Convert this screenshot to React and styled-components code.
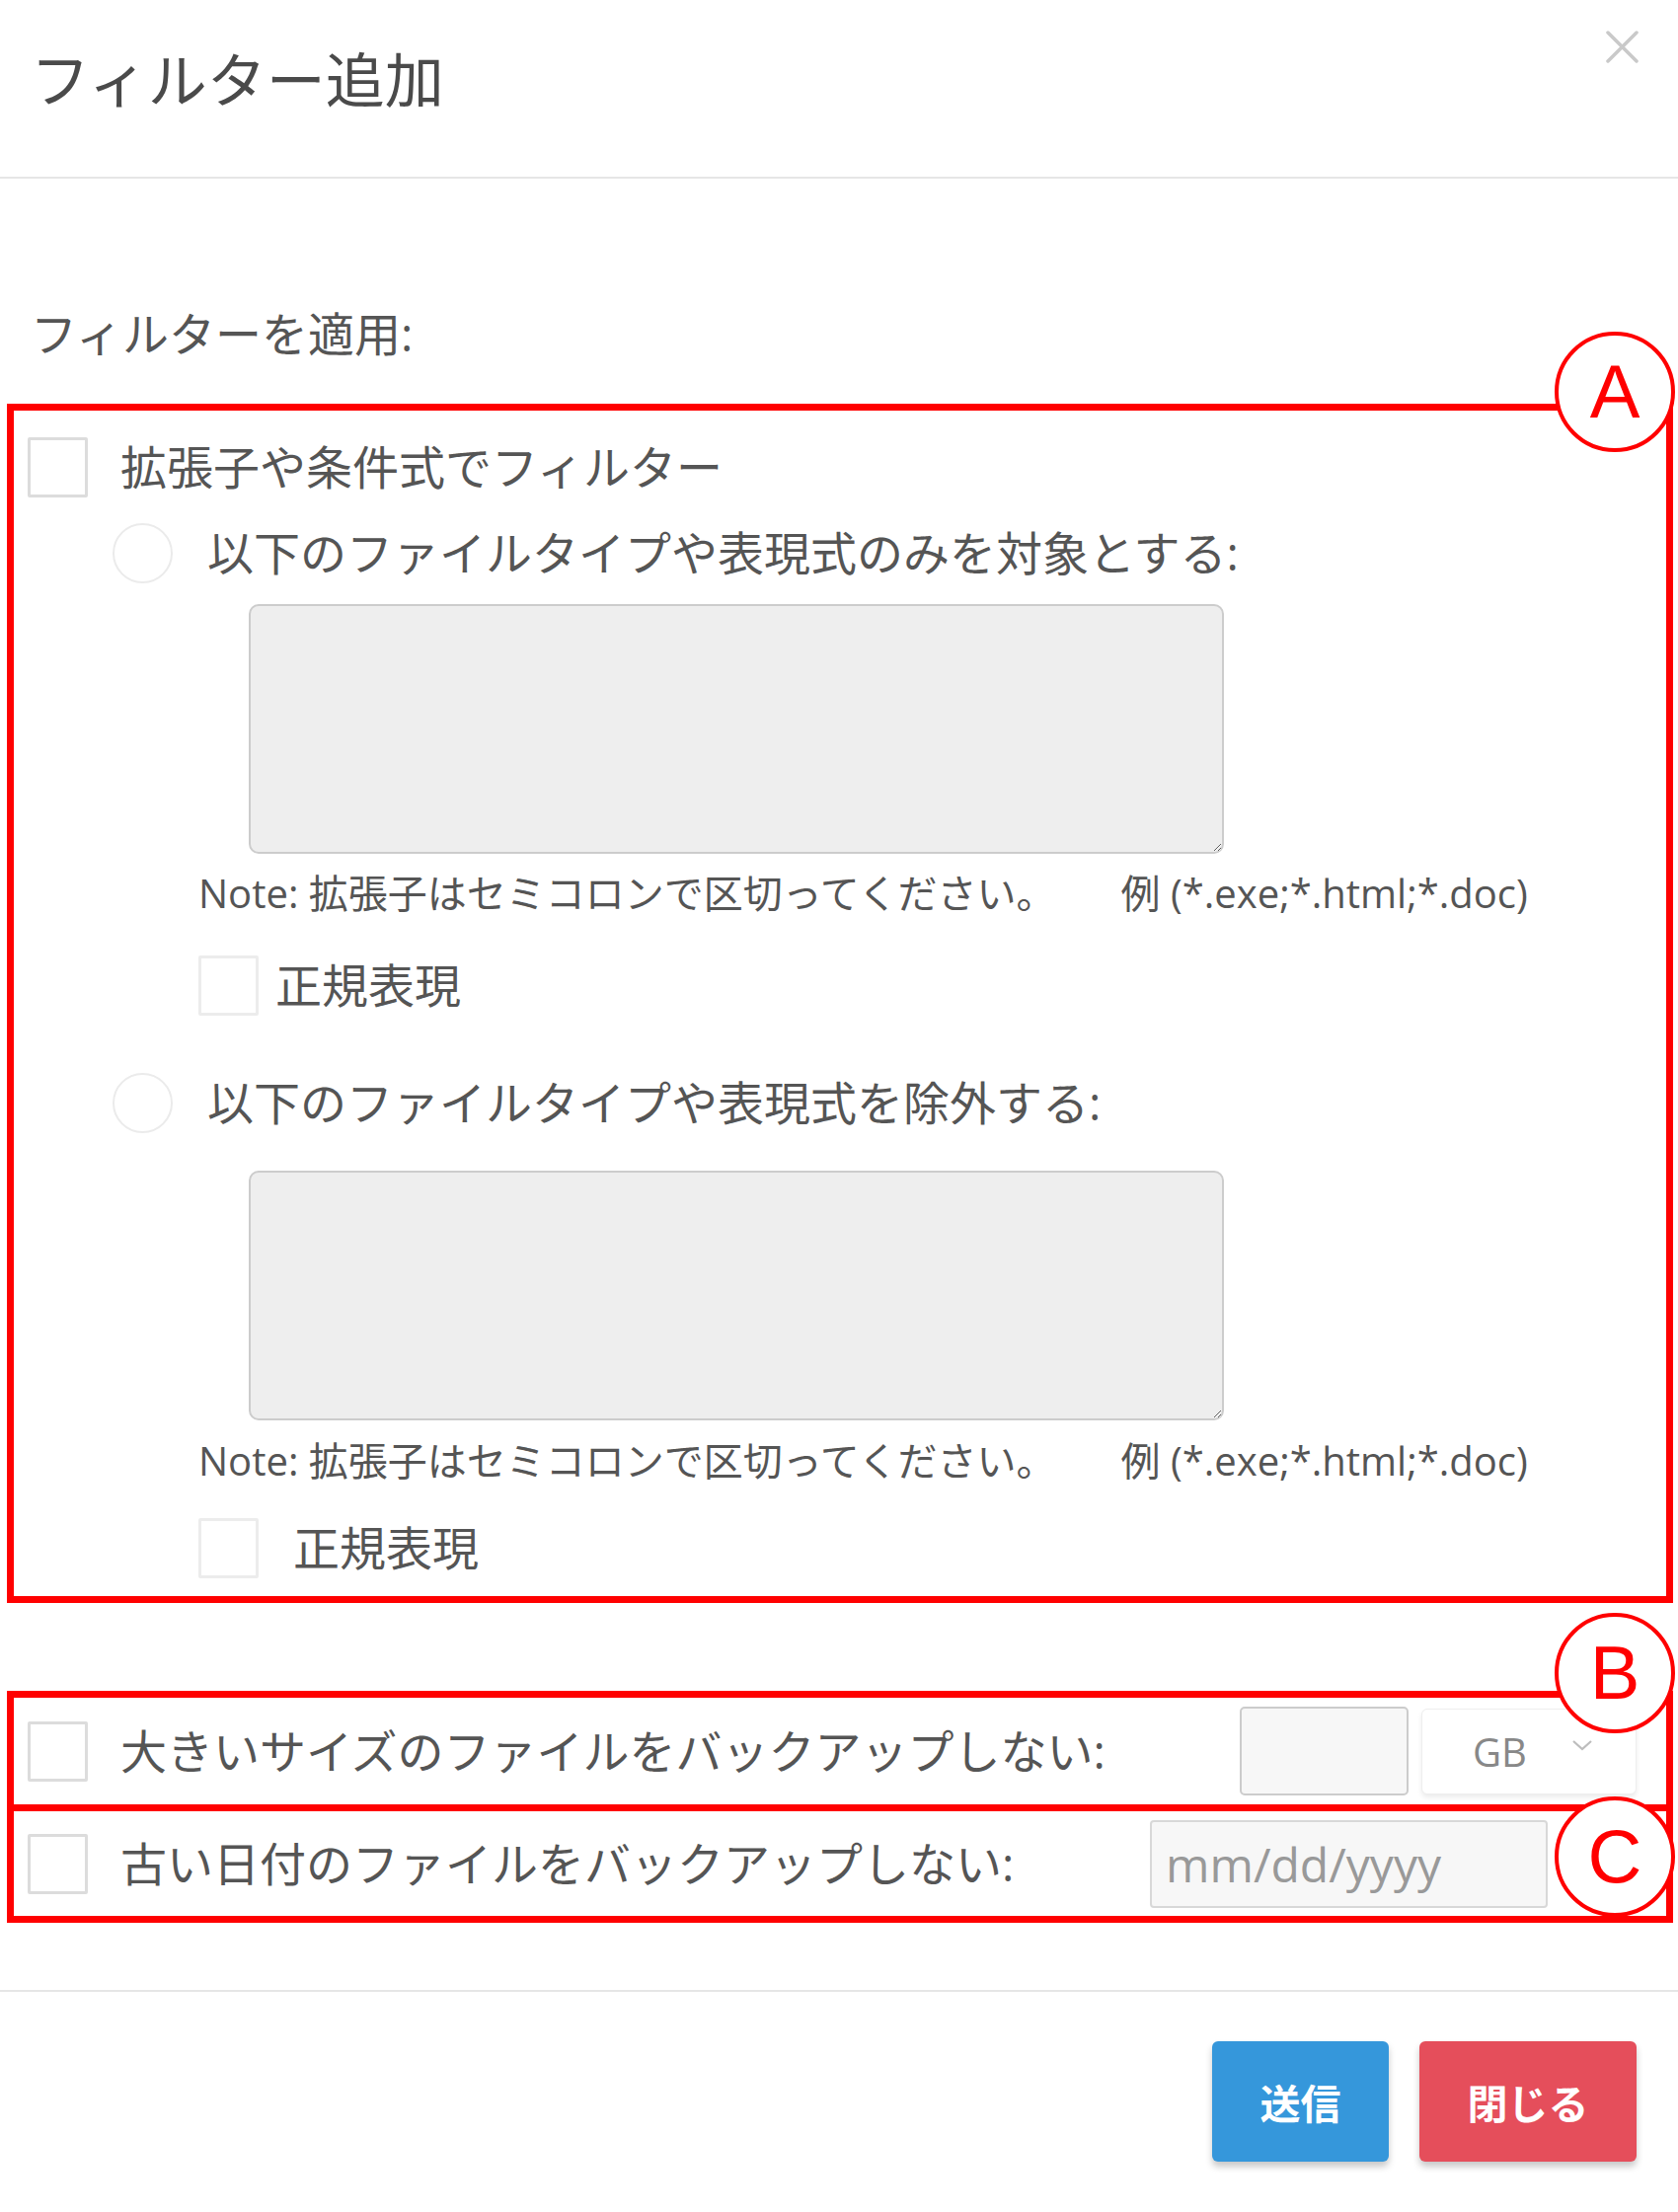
import React from 'react';
import styled, { createGlobalStyle } from 'styled-components';

const GlobalStyle = createGlobalStyle`
  html, body {
    margin: 0;
    padding: 0;
    background: #ffffff;
  }
  body {
    font-family: "Open Sans", "Noto Sans CJK JP", sans-serif;
    color: #555555;
  }
  * {
    box-sizing: border-box;
  }
`;

const Modal = styled.div`
  width: 1700px;
  background: #ffffff;
`;

const Header = styled.div`
  height: 181px;
  display: flex;
  align-items: flex-start;
  justify-content: space-between;
  padding: 0 40px 0 31px;
  border-bottom: 2px solid #e6e6e6;
`;

const Title = styled.h4`
  margin: 36px 0 0;
  font-size: 60px;
  line-height: 90px;
  font-weight: 400;
  color: #4a4a4a;
`;

const CloseButton = styled.button`
  margin-top: 31px;
  width: 33px;
  height: 33px;
  padding: 0;
  border: none;
  background: transparent;
  display: flex;
`;

const Body = styled.div`
  padding: 127px 5px 68px 7px;
`;

const SectionLabel = styled.div`
  margin-left: 24px;
  font-size: 47px;
  line-height: 60px;
`;

const Marked = styled.div`
  position: relative;
  border: 7px solid #ff0000;
`;

const FilterBox = styled(Marked)`
  margin-top: 41px;
  padding: 27px 0 18px 14px;
`;

const LineBox = styled(Marked)`
  height: ${p => p.$h}px;
  margin-top: ${p => p.$mt}px;
  display: flex;
  align-items: center;
  padding: 0 ${p => p.$pr}px 0 14px;
`;

const Badge = styled.div`
  position: absolute;
  top: ${p => p.$top}px;
  right: -9px;
  width: 122px;
  height: 122px;
  border: 4px solid #ff0000;
  border-radius: 50%;
  background: #ffffff;
  display: flex;
  align-items: center;
  justify-content: center;
  font-family: "Liberation Sans", Arial, sans-serif;
  font-size: 76px;
  line-height: 1;
  color: #ff0000;
  z-index: 2;
`;

const Row = styled.div`
  display: flex;
  align-items: center;
  gap: ${p => p.$gap}px;
  margin-top: ${p => p.$mt || 0}px;
  margin-left: ${p => p.$ml || 0}px;
`;

const Check = styled.input.attrs({ type: 'checkbox' })`
  appearance: none;
  flex: none;
  margin: 0;
  width: 61px;
  height: 61px;
  border: 3px solid ${p => p.$light ? '#ececec' : '#dcdcdc'};
  border-radius: 2px;
  background: #ffffff;
`;

const Radio = styled.input.attrs({ type: 'radio' })`
  appearance: none;
  flex: none;
  margin: 0;
  width: 61px;
  height: 61px;
  border: 2px solid #ebebeb;
  border-radius: 50%;
  background: #ffffff;
`;

const Label = styled.span`
  font-size: 47px;
  line-height: 61px;
  white-space: nowrap;
  color: #555555;
`;

const Patterns = styled.textarea`
  display: block;
  margin: ${p => p.$mt}px 0 0 224px;
  width: 988px;
  height: 253px;
  border: 2px solid #cccccc;
  border-radius: 10px;
  background: #eeeeee;
  resize: both;
  outline: none;
`;

const Note = styled.div`
  margin: ${p => p.$mt}px 0 0 173px;
  font-size: 40px;
  line-height: 50px;
  white-space: nowrap;
  color: #555555;
`;

const Example = styled.span`
  margin-left: 66px;
`;

const LineLabel = styled(Label)`
  flex: 1;
  margin-left: 33px;
`;

const SizeInput = styled.input`
  flex: none;
  width: 171px;
  height: 90px;
  margin: 0;
  border: 2px solid #cccccc;
  border-radius: 5px;
  background: #f7f7f7;
  outline: none;
`;

const UnitSelect = styled.div`
  flex: none;
  width: 218px;
  height: 87px;
  margin-left: 13px;
  display: flex;
  align-items: center;
  padding-left: 51px;
  border: 1px solid #eeeeee;
  border-radius: 6px;
  background: #ffffff;
  box-shadow: 0 3px 5px rgba(0, 0, 0, 0.08);
  font-size: 40px;
  color: #888888;
`;

const Chevron = styled.svg`
  margin: 0 43px 12px auto;
`;

const DateInput = styled.input`
  flex: none;
  width: 403px;
  height: 89px;
  margin: 0;
  padding: 0 14px;
  border: 2px solid #d8d8d8;
  border-radius: 4px;
  background: #f7f7f7;
  font-family: "Open Sans", sans-serif;
  font-size: 48px;
  color: #555555;
  outline: none;

  &::placeholder {
    color: #999999;
  }
`;

const Footer = styled.div`
  border-top: 2px solid #e6e6e6;
  padding: 50px 42px 50px 0;
  display: flex;
  justify-content: flex-end;
  gap: 31px;
`;

const Button = styled.button`
  width: ${p => p.$w}px;
  height: 122px;
  border: none;
  border-radius: 6px;
  background: ${p => p.$bg};
  box-shadow: 0 5px 7px rgba(0, 0, 0, 0.22);
  font-family: "Open Sans", "Noto Sans CJK JP", sans-serif;
  font-size: 41px;
  font-weight: 700;
  color: #ffffff;
`;

function ExtensionOption({ label, mt, areaMt, noteMt, checkMt, labelGap }) {
  return (
    <>
      <Row $gap={35} $ml={86} $mt={mt}>
        <Radio name="mode" />
        <Label>{label}</Label>
      </Row>
      <Patterns readOnly $mt={areaMt} />
      <Note $mt={noteMt}>
        Note: 拡張子はセミコロンで区切ってください。
        <Example>例 (*.exe;*.html;*.doc)</Example>
      </Note>
      <Row $gap={labelGap} $ml={173} $mt={checkMt}>
        <Check $light />
        <Label>正規表現</Label>
      </Row>
    </>
  );
}

export default function App() {
  return (
    <>
      <GlobalStyle />
      <Modal>
        <Header>
          <Title>フィルター追加</Title>
          <CloseButton aria-label="close">
            <svg width="33" height="33" viewBox="0 0 33 33">
              <path d="M2 2 L31 31 M31 2 L2 31" stroke="#c9c9c9" strokeWidth="3.5" strokeLinecap="round" />
            </svg>
          </CloseButton>
        </Header>

        <Body>
          <SectionLabel>フィルターを適用:</SectionLabel>

          <FilterBox>
            <Badge $top={-80}>A</Badge>
            <Row $gap={33}>
              <Check />
              <Label>拡張子や条件式でフィルター</Label>
            </Row>
            <ExtensionOption
              label="以下のファイルタイプや表現式のみを対象とする:"
              mt={26}
              areaMt={21}
              noteMt={15}
              checkMt={38}
              labelGap={17}
            />
            <ExtensionOption
              label="以下のファイルタイプや表現式を除外する:"
              mt={58}
              areaMt={38}
              noteMt={16}
              checkMt={33}
              labelGap={35}
            />
          </FilterBox>

          <LineBox $h={122} $mt={89} $pr={30}>
            <Badge $top={-86}>B</Badge>
            <Check />
            <LineLabel>大きいサイズのファイルをバックアップしない:</LineLabel>
            <SizeInput />
            <UnitSelect>
              GB
              <Chevron width="22" height="13" viewBox="0 0 22 13">
                <path d="M2 2 L11 10 L20 2" fill="none" stroke="#bdbdbd" strokeWidth="2.2" />
              </Chevron>
            </UnitSelect>
          </LineBox>

          <LineBox $h={120} $mt={-7} $pr={120}>
            <Badge $top={-15}>C</Badge>
            <Check />
            <LineLabel>古い日付のファイルをバックアップしない:</LineLabel>
            <DateInput placeholder="mm/dd/yyyy" />
          </LineBox>
        </Body>

        <Footer>
          <Button $w={179} $bg="#3597db">送信</Button>
          <Button $w={220} $bg="#e54e5b">閉じる</Button>
        </Footer>
      </Modal>
    </>
  );
}
